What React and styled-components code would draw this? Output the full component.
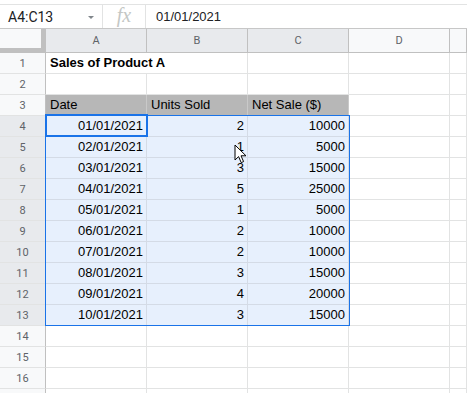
import React from "react";
import styled, { createGlobalStyle } from "styled-components";

const GlobalStyle = createGlobalStyle`
  html, body {
    margin: 0;
    padding: 0;
    background: #fff;
    overflow: hidden;
  }
  * {
    box-sizing: border-box;
  }
`;

const COLS = ["A", "B", "C", "D", ""];
const ROW_H = 21;
const COL_W = 101;
const HEAD_W = 46;
const HEAD_H = 24;

const data = [
  ["01/01/2021", 2, 10000],
  ["02/01/2021", 1, 5000],
  ["03/01/2021", 3, 15000],
  ["04/01/2021", 5, 25000],
  ["05/01/2021", 1, 5000],
  ["06/01/2021", 2, 10000],
  ["07/01/2021", 2, 10000],
  ["08/01/2021", 3, 15000],
  ["09/01/2021", 4, 20000],
  ["10/01/2021", 3, 15000],
];

const Page = styled.div`
  width: 467px;
  height: 393px;
  overflow: hidden;
  background: #fff;
  font-family: "Liberation Sans", Arial, sans-serif;
`;

const FormulaBar = styled.div`
  margin-top: 4px;
  height: 25px;
  display: flex;
  align-items: center;
  border-top: 1px solid #e2e3e3;
  border-bottom: 1px solid #c7c7c7;
`;

const NameBox = styled.div`
  width: 103px;
  height: 100%;
  display: flex;
  align-items: center;
  justify-content: space-between;
  padding: 0 8px 0 8px;
  font-family: Roboto, "Liberation Sans", sans-serif;
  font-size: 14px;
  color: #202124;
  border-right: 1px solid #e2e3e3;
`;

const Caret = styled.span`
  width: 0;
  height: 0;
  border-left: 3.5px solid transparent;
  border-right: 3.5px solid transparent;
  border-top: 3.5px solid #80868b;
  margin-top: 2px;
`;

const Fx = styled.div`
  width: 43px;
  height: 100%;
  display: flex;
  align-items: center;
  justify-content: center;
  font-family: "Liberation Serif", "Times New Roman", serif;
  font-style: italic;
  font-size: 20px;
  color: #c4c7c5;
  border-right: 1px solid #e2e3e3;
  padding-bottom: 3px;
`;

const FormulaValue = styled.div`
  padding-left: 10px;
  font-size: 13px;
  color: #202124;
`;

const Sheet = styled.div`
  position: relative;
  display: grid;
  grid-template-columns: ${HEAD_W}px repeat(4, ${COL_W}px) 1fr;
  grid-template-rows: ${HEAD_H}px;
  grid-auto-rows: ${ROW_H}px;
`;

const Corner = styled.div`
  background: #f8f9fa;
  border-right: 5px solid #c0c0c0;
  border-bottom: 5px solid #c0c0c0;
`;

const ColHead = styled.div`
  display: flex;
  align-items: center;
  justify-content: center;
  font-family: Roboto, "Liberation Sans", sans-serif;
  font-size: 11px;
  color: #5f6368;
  background: ${(p) => (p.$active ? "#e8eaed" : "#f8f9fa")};
  border-right: 1px solid #c0c0c0;
  border-bottom: 1px solid #c0c0c0;
`;

const RowHead = styled.div`
  display: flex;
  align-items: center;
  justify-content: center;
  font-family: Roboto, "Liberation Sans", sans-serif;
  font-size: 11px;
  color: #5f6368;
  background: ${(p) => (p.$active ? "#e8eaed" : "#f8f9fa")};
  border-right: 1px solid #c0c0c0;
  border-bottom: 1px solid #e2e3e3;
`;

const Cell = styled.div`
  grid-column: span ${(p) => p.$span || 1};
  display: flex;
  align-items: flex-end;
  justify-content: ${(p) => (p.$right ? "flex-end" : "flex-start")};
  padding: 0 3px 2px 4px;
  font-size: 13px;
  line-height: 16px;
  white-space: nowrap;
  color: #000;
  font-weight: ${(p) => (p.$bold ? 700 : 400)};
  background: ${(p) =>
    p.$head ? "#b7b7b7" : p.$selected ? "#e7f0fd" : "#fff"};
  border-right: 1px solid
    ${(p) => (p.$head ? "#c9c9c9" : p.$selected ? "#d4dbe6" : "#e2e3e3")};
  border-bottom: 1px solid
    ${(p) => (p.$head ? "#b7b7b7" : p.$selected ? "#d4dbe6" : "#e2e3e3")};
`;

const RangeBox = styled.div`
  position: absolute;
  border: 1px solid #1a73e8;
  pointer-events: none;
`;

const ActiveBox = styled.div`
  position: absolute;
  border: 2px solid #1a73e8;
  pointer-events: none;
`;

const Pointer = styled.svg`
  position: absolute;
  left: 234px;
  top: 115px;
`;

const Sales = () => {
  const rows = [];
  for (let r = 1; r <= 17; r++) {
    const inRange = r >= 4 && r <= 13;
    const cells = [];
    if (r === 1) {
      cells.push({ text: "Sales of Product A", bold: true, span: 2 });
      cells.push({}, {}, {});
    } else if (r === 3) {
      cells.push({ text: "Date", head: true });
      cells.push({ text: "Units Sold", head: true });
      cells.push({ text: "Net Sale ($)", head: true });
      cells.push({}, {});
    } else if (inRange) {
      const d = data[r - 4];
      d.forEach((v) => cells.push({ text: v, right: true, selected: true }));
      cells.push({}, {});
    } else {
      cells.push({}, {}, {}, {}, {});
    }
    rows.push({ r, inRange, cells });
  }

  const rangeLeft = HEAD_W - 1;
  const rangeTop = HEAD_H + 3 * ROW_H - 1;

  return (
    <Sheet>
      <Corner />
      {COLS.map((c, i) => (
        <ColHead key={i} $active={i < 3}>
          {c}
        </ColHead>
      ))}
      {rows.map(({ r, inRange, cells }) => (
        <React.Fragment key={r}>
          <RowHead $active={inRange}>{r}</RowHead>
          {cells.map((c, i) => (
            <Cell
              key={i}
              $span={c.span}
              $bold={c.bold}
              $head={c.head}
              $right={c.right}
              $selected={c.selected}
            >
              {c.text}
            </Cell>
          ))}
        </React.Fragment>
      ))}
      <RangeBox
        style={{
          left: rangeLeft,
          top: rangeTop,
          width: 3 * COL_W + 2,
          height: 10 * ROW_H + 1,
        }}
      />
      <ActiveBox
        style={{
          left: rangeLeft,
          top: rangeTop - 1,
          width: COL_W + 2,
          height: ROW_H + 2,
        }}
      />
      <Pointer width="14" height="22" viewBox="0 0 14 22">
        <path
          d="M1 1 L1 16 L4.6 12.6 L7.2 18.6 L9.6 17.6 L7 11.8 L12 11.8 Z"
          fill="#fff"
          stroke="#000"
          strokeWidth="1"
          strokeLinejoin="round"
        />
      </Pointer>
    </Sheet>
  );
};

export default function App() {
  return (
    <Page>
      <GlobalStyle />
      <FormulaBar>
        <NameBox>
          A4:C13
          <Caret />
        </NameBox>
        <Fx>fx</Fx>
        <FormulaValue>01/01/2021</FormulaValue>
      </FormulaBar>
      <Sales />
    </Page>
  );
}
